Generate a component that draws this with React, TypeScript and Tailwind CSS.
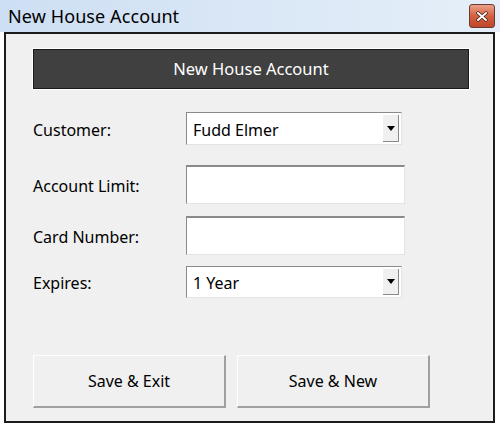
import React from "react";

function Combo({ value }: { value: string }) {
  return (
    <div className="relative w-[216px] h-full bg-white border border-[#a0a0a0] border-t-[#8a8a8a] border-l-[#8a8a8a] border-b-[#e3e3e3] border-r-[#e3e3e3] flex items-center">
      <span className="pl-[6px] pt-[2px] text-[16px] text-black">{value}</span>
      <div className="absolute right-[2px] top-[2px] bottom-[2px] w-[16px] bg-[#f0f0f0] border-r border-b border-[#8a8a8a] flex items-center justify-center">
        <svg width="8" height="5" viewBox="0 0 8 5">
          <path d="M0 0 H8 L4 5 Z" fill="#000" />
        </svg>
      </div>
    </div>
  );
}

function Field() {
  return (
    <div className="w-[219px] h-full bg-white border border-[#e3e3e3] border-t-[2px] border-t-[#8a8a8a] border-l-[#8a8a8a]" />
  );
}

function Row({ label, children, className }: { label: string; children: React.ReactNode; className: string }) {
  return (
    <div className={`flex items-center ${className}`}>
      <div className="w-[153px] pt-[2px] text-[16px] text-black">{label}</div>
      {children}
    </div>
  );
}

export default function App() {
  return (
    <div className="w-[500px] h-[427px] bg-white overflow-hidden" style={{ fontFamily: '"Noto Sans", "Open Sans", sans-serif' }}>
      <div className="h-[32px] flex items-center justify-between pl-[8px] pr-[5px] bg-gradient-to-r from-[#cddff3] to-[#e6eff9]">
        <span className="text-[18px] text-black leading-none tracking-[0.1px]">New House Account</span>
        <div className="w-[26px] h-[24px] rounded-[3px] border border-[#6b3a30] bg-gradient-to-b from-[#eba18a] via-[#d4603f] to-[#c0462a] flex items-center justify-center">
          <svg width="12" height="11" viewBox="0 0 12 11">
            <path d="M2 2 L10 9 M10 2 L2 9" stroke="#3a1a12" strokeWidth="3.4" strokeLinecap="round" />
            <path d="M2 2 L10 9 M10 2 L2 9" stroke="#fff" strokeWidth="2" strokeLinecap="round" />
          </svg>
        </div>
      </div>
      <div className="ml-[4px] w-[491px] h-[391px] border-2 border-[#1c1c1c] bg-[#f0f0f0] pl-[27px] pt-[15px] flex flex-col">
        <div className="w-[436px] h-[40px] bg-[#404040] border border-[#1a1a1a] outline outline-1 outline-white flex items-center justify-center text-white text-[16.5px]">
          New House Account
        </div>
        <Row label="Customer:" className="mt-[23px] h-[33px]">
          <Combo value="Fudd Elmer" />
        </Row>
        <Row label="Account Limit:" className="mt-[20px] h-[39px]">
          <Field />
        </Row>
        <Row label="Card Number:" className="mt-[12px] h-[39px]">
          <Field />
        </Row>
        <Row label="Expires:" className="mt-[11px] h-[32px]">
          <Combo value="1 Year" />
        </Row>
        <div className="mt-[57px] flex gap-[11px]">
          <button className="w-[193px] h-[53px] bg-[#f0f0f0] border border-white border-r-[#a0a0a0] border-b-[#a0a0a0] border-b-2 border-r-2 text-[16px] text-black">
            Save &amp; Exit
          </button>
          <button className="w-[193px] h-[53px] bg-[#f0f0f0] border border-white border-r-[#a0a0a0] border-b-[#a0a0a0] border-b-2 border-r-2 text-[16px] text-black">
            Save &amp; New
          </button>
        </div>
      </div>
    </div>
  );
}
